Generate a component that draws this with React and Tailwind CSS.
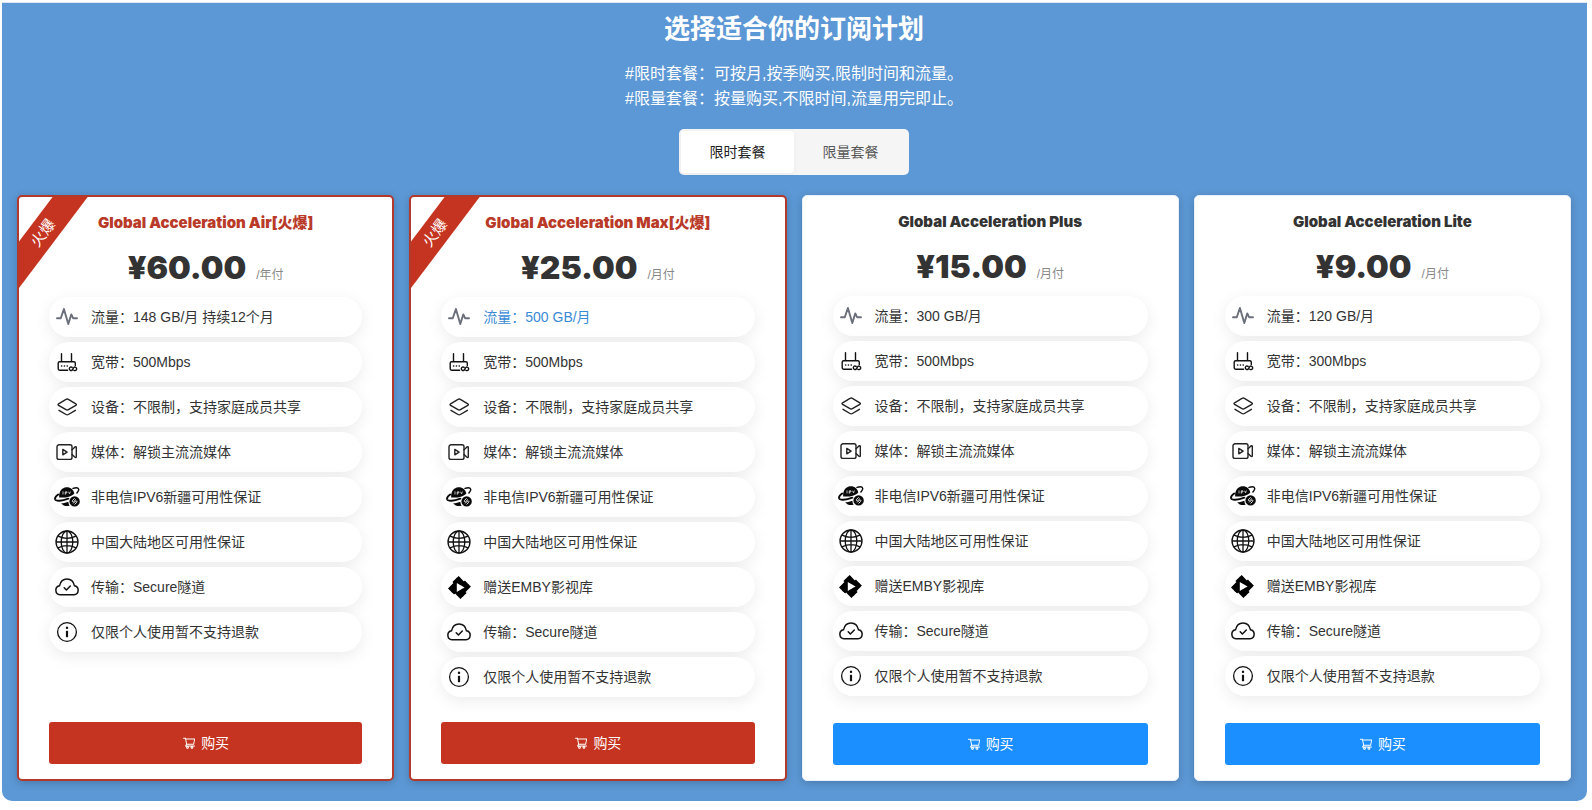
import React, { useState } from 'react';
import { AiOutlineShoppingCart } from 'react-icons/ai';
import { SiEmby } from 'react-icons/si';

const PulseIcon = () => (
  <svg viewBox="0 0 24 24" className="size-6" fill="none" stroke="#6b6f7b" strokeWidth="1.9" strokeLinecap="round" strokeLinejoin="round">
    <path d="M2 13.2h3.8L8.9 4l4.4 15 3-9.6 1.8 3.8H22" />
  </svg>
);

const RouterIcon = () => (
  <svg viewBox="0 0 24 24" className="size-6" fill="none" stroke="#111" strokeWidth="1.4" strokeLinecap="round" strokeLinejoin="round">
    <path d="M6.5 3.800v8M16.5 3.800v8M12.600 20.200H4.600a1.400 1.400 0 0 1-1.400-1.400v-5.600a1.400 1.400 0 0 1 1.400-1.400h14.300a1.400 1.400 0 0 1 1.400 1.400v2.200" />
    <path d="M6.600 16h.1M9.400 16h.1M12.200 16h.1" strokeWidth="1.600" />
    <path d="M17.200 17.400c-1.300-1-2.900-.1-2.900 1.400s1.700 2.300 2.900 1.300l1.600-2.600c1.300-1 2.900-.1 2.900 1.400s-1.700 2.300-2.900 1.300" />
  </svg>
);

const LayersIcon = () => (
  <svg viewBox="0 0 24 24" className="size-6" fill="none" stroke="#222" strokeWidth="1.4" strokeLinecap="round" strokeLinejoin="round">
    <path d="M11 4.400 3.600 8.800c-.8.500-.8 1.100 0 1.600l7.400 4.300c.8.500 1.600.5 2.400 0l7.400-4.300c.8-.5.8-1.100 0-1.600L13.400 4.400c-.8-.5-1.600-.5-2.400 0z" />
    <path d="m4 15.300 7 4.200c.8.500 1.600.5 2.400 0l7-4.200" />
  </svg>
);

const VideoIcon = () => (
  <svg viewBox="0 0 24 24" className="size-6" fill="none" stroke="#222" strokeWidth="1.4" strokeLinecap="round" strokeLinejoin="round">
    <path d="M4 4.800h11a2 2 0 0 1 2 2v10.600a2 2 0 0 1-2 2H4a2 2 0 0 1-2-2V6.800a2 2 0 0 1 2-2z" />
    <path d="M17 9.800l3-2.900c.6-.5 1.300-.3 1.300.4v9.600c0 .7-.7.900-1.300.4l-3-2.900" />
    <path d="M7.800 9.400v5.400l4.300-2.700z" />
  </svg>
);

const PlanetIcon = () => (
  <svg viewBox="0 0 26 24" className="h-6 w-[26px] shrink-0" fill="none" strokeLinecap="round">
    <path d="M5.200 12.400C4.600 6.400 8 2.600 12.300 2.200c4-.3 7.400 2.400 8 6.500-3.600 3.200-9.500 4.400-15.100 3.700z" fill="#0a0a0a" />
    <path d="M9 6.800v2.300M11.300 9.300V6.800h1.600v1.200h-1.600M14.700 7.100l.8 1.700.8-1.900" stroke="#fff" strokeWidth=".7" />
    <path d="M19 3.400c3.200-.9 5.200-.6 5.600.6.400 1-.3 2.400-1.700 3.900" stroke="#0a0a0a" strokeWidth="1.500" />
    <path d="M4.200 9.600c-2.300 1.700-3.500 3.400-3.100 4.700.8 2.300 6.600 1.900 13.200-.6" stroke="#0a0a0a" strokeWidth="1.900" />
    <path d="M7.200 18.200c2.700 0 5.200-.6 7.200-1.500.1 1.800.5 2.900 1.300 4-3.300 1-6.500.2-8.500-2.500z" fill="#0a0a0a" />
    <circle cx="20.600" cy="16.400" r="5.200" fill="#0a0a0a" />
    <path d="M20.300 13.600l-1.800 1.900c-.7.800.4 1.900 1.200 1.200l2-2M20.900 19.200l1.800-1.900c.7-.8-.4-1.900-1.200-1.200l-2 2" stroke="#fff" strokeWidth=".9" />
  </svg>
);

const GlobeIcon = () => (
  <svg viewBox="0 0 24 24" className="size-6" fill="none" stroke="#111" strokeWidth="1.300">
    <circle cx="12" cy="12" r="11" />
    <ellipse cx="12" cy="12" rx="5.800" ry="11" />
    <path d="M12 1v22M1 12h22M3 6.200c5.400 2.600 12.600 2.600 18 0M3 17.800c5.400-2.600 12.600-2.600 18 0" />
  </svg>
);

const CloudIcon = () => (
  <svg viewBox="0 0 24 24" className="size-6" fill="none" stroke="#111" strokeWidth="1.500" strokeLinecap="round" strokeLinejoin="round">
    <path d="M5 19.700h14a4.500 4.500 0 0 0 .5-8.900C18.600 6.800 15.700 4 12 4s-6.600 2.800-7.500 6.800a4.500 4.500 0 0 0 .5 8.900z" />
    <path d="m9.200 12.700 2.200 2.300 3.900-4" />
  </svg>
);

const InfoIcon = () => (
  <svg viewBox="0 0 24 24" className="size-6" fill="none" stroke="#111">
    <circle cx="12" cy="12" r="9.400" strokeWidth="1.300" />
    <path d="M12 10.800v6.400" strokeWidth="2.200" />
    <path d="M12 6.700v2.200" strokeWidth="2.200" />
  </svg>
);

const EmbyIcon = () => <SiEmby size={23} color="#000" />;

const features = {
  bandwidth: (speed) => ({ icon: RouterIcon, text: `宽带：${speed}` }),
  traffic: (text, highlight) => ({ icon: PulseIcon, text: `流量：${text}`, highlight }),
  devices: { icon: LayersIcon, text: '设备：不限制，支持家庭成员共享' },
  media: { icon: VideoIcon, text: '媒体：解锁主流流媒体' },
  ipv6: { icon: PlanetIcon, text: '非电信IPV6新疆可用性保证' },
  mainland: { icon: GlobeIcon, text: '中国大陆地区可用性保证' },
  emby: { icon: EmbyIcon, text: '赠送EMBY影视库' },
  secure: { icon: CloudIcon, text: '传输：Secure隧道' },
  refund: { icon: InfoIcon, text: '仅限个人使用暂不支持退款' },
};

const { devices, media, ipv6, mainland, emby, secure, refund } = features;

const plans = [
  {
    name: 'Global Acceleration Air[火爆]',
    price: '¥60.00',
    period: '/年付',
    hot: true,
    items: [features.traffic('148 GB/月 持续12个月'), features.bandwidth('500Mbps'), devices, media, ipv6, mainland, secure, refund],
  },
  {
    name: 'Global Acceleration Max[火爆]',
    price: '¥25.00',
    period: '/月付',
    hot: true,
    items: [features.traffic('500 GB/月', true), features.bandwidth('500Mbps'), devices, media, ipv6, mainland, emby, secure, refund],
  },
  {
    name: 'Global Acceleration Plus',
    price: '¥15.00',
    period: '/月付',
    items: [features.traffic('300 GB/月'), features.bandwidth('500Mbps'), devices, media, ipv6, mainland, emby, secure, refund],
  },
  {
    name: 'Global Acceleration Lite',
    price: '¥9.00',
    period: '/月付',
    items: [features.traffic('120 GB/月'), features.bandwidth('300Mbps'), devices, media, ipv6, mainland, emby, secure, refund],
  },
];

const tabs = ['限时套餐', '限量套餐'];

const PlanCard = ({ plan }) => (
  <article
    className={`relative flex flex-col overflow-hidden rounded-[5px] bg-white px-[30px] py-[15px] shadow-[0_2px_8px_rgba(0,0,0,0.2)] ${
      plan.hot ? 'border-2 border-[#b23a2c]' : 'border border-[#e8f0fa]'
    }`}
  >
    {plan.hot && (
      <span className="absolute top-[22px] -left-[46px] h-7 w-[140px] -rotate-53 bg-[#c53420] text-center text-[15px] leading-7 text-white">
        火爆
      </span>
    )}
    <h2
      className={`text-center font-['Inter','Noto_Sans_CJK_SC',sans-serif] text-[15px] leading-[22px] font-black ${
        plan.hot ? 'text-[#b93a28]' : 'text-[#333]'
      }`}
    >
      {plan.name}
    </h2>
    <p className="mt-2.5 mb-[5px] flex items-baseline justify-center gap-2.5">
      <span className="font-['Inter',sans-serif] text-[32px] leading-[48px] font-black text-[#333]">{plan.price}</span>
      <span className="text-xs text-[#888]">{plan.period}</span>
    </p>
    <ul className="flex flex-col gap-[5px]">
      {plan.items.map(({ icon: Icon, text, highlight }) => (
        <li
          key={text}
          className={`flex h-10 items-center gap-3 rounded-full bg-white pl-1.5 text-sm shadow-[0_4px_16px_rgba(0,0,0,0.08)] ${
            highlight ? 'text-[#3a8ad6]' : 'text-[#333]'
          }`}
        >
          <span className="flex w-6 shrink-0 items-center justify-center">
            <Icon />
          </span>
          {text}
        </li>
      ))}
    </ul>
    <div className="mt-auto pt-[25px]">
      <button
        type="button"
        className={`flex h-[42px] w-full items-center justify-center gap-[5px] rounded-[3px] text-sm text-white ${
          plan.hot ? 'bg-[#c53420]' : 'bg-[#1b8fff]'
        }`}
      >
        <AiOutlineShoppingCart size={14} />
        购买
      </button>
    </div>
  </article>
);

const App = () => {
  const [active, setActive] = useState(tabs[0]);

  return (
    <div className="min-h-screen bg-white pt-0.5 font-['Liberation_Sans','Noto_Sans_CJK_SC',sans-serif]">
      <main className="mr-[5px] ml-0.5 rounded-b-[10px] border-t border-[#dfe5f2] bg-[#5c98d5] pt-1.5 pr-4 pb-5 pl-[15px]">
        <header className="text-center text-white">
          <h1 className="text-[26px] leading-10 font-bold">选择适合你的订阅计划</h1>
          <p className="mt-3 text-base leading-[25px]">
            #限时套餐：可按月,按季购买,限制时间和流量。
            <br />
            #限量套餐：按量购买,不限时间,流量用完即止。
          </p>
        </header>

        <div className="mt-[18px] flex justify-center">
          <div className="flex rounded-[5px] bg-[#f5f5f5] p-0.5">
            {tabs.map((tab) => (
              <button
                key={tab}
                type="button"
                aria-pressed={active === tab}
                onClick={() => setActive(tab)}
                className={`h-[42px] w-[113px] rounded-[3px] text-sm ${
                  active === tab ? 'bg-white text-[#222] shadow-[0_1px_4px_rgba(0,0,0,0.05)]' : 'text-[#595959]'
                }`}
              >
                {tab}
              </button>
            ))}
          </div>
        </div>

        <section className="mt-5 grid grid-cols-4 gap-[15px]">
          {plans.map((plan) => (
            <PlanCard key={plan.name} plan={plan} />
          ))}
        </section>
      </main>
    </div>
  );
};

export default App;
